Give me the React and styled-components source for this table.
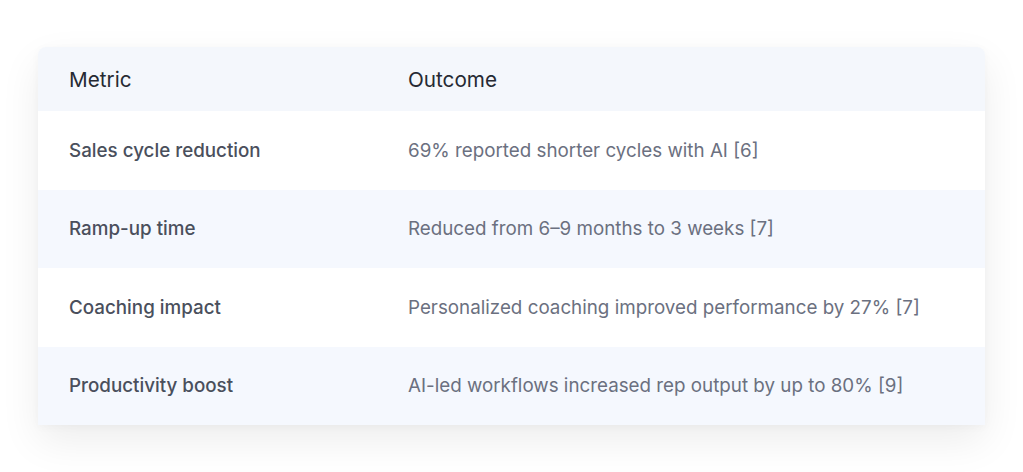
import React from 'react';
import styled, { createGlobalStyle } from 'styled-components';

const GlobalStyle = createGlobalStyle`
  html, body {
    margin: 0;
    background: #ffffff;
    font-family: Inter, "Noto Sans", sans-serif;
  }
`;

const rows = [
  ['Sales cycle reduction', '69% reported shorter cycles with AI [6]'],
  ['Ramp-up time', 'Reduced from 6–9 months to 3 weeks [7]'],
  ['Coaching impact', 'Personalized coaching improved performance by 27% [7]'],
  ['Productivity boost', 'AI-led workflows increased rep output by up to 80% [9]'],
];

class App extends React.Component {
  render() {
    return (
      <Page>
        <GlobalStyle />
        <Card>
          <HeadRow>
            <HeadCell>Metric</HeadCell>
            <HeadCell>Outcome</HeadCell>
          </HeadRow>
          {rows.map(([metric, outcome], i) => (
            <Row key={metric} shaded={i % 2 === 1}>
              <MetricCell>{metric}</MetricCell>
              <OutcomeCell>{outcome}</OutcomeCell>
            </Row>
          ))}
        </Card>
      </Page>
    );
  }
}

const Page = styled.div`
  min-height: 100vh;
  box-sizing: border-box;
  padding: 47px 38px 0 38px;
  background: #ffffff;
`;

const Card = styled.div`
  width: 947px;
  border-radius: 8px 8px 0 0;
  background: #ffffff;
  box-shadow: 0 16px 40px rgba(0, 0, 0, 0.075), 0 2px 10px rgba(0, 0, 0, 0.03);
`;

const HeadRow = styled.div`
  display: grid;
  grid-template-columns: 339px 1fr;
  align-items: center;
  height: 64px;
  padding-left: 31px;
  background: #f4f7fc;
  border-radius: 8px 8px 0 0;
`;

const HeadCell = styled.div`
  font-size: 20.7px;
  font-weight: 400;
  color: #262a33;
`;

const Row = styled.div`
  display: grid;
  grid-template-columns: 339px 1fr;
  align-items: center;
  height: 78.5px;
  padding-left: 31px;
  background: ${p => (p.shaded ? '#f5f8fe' : '#ffffff')};
`;

const MetricCell = styled.div`
  font-size: 18.8px;
  font-weight: 500;
  color: #4a4f5c;
`;

const OutcomeCell = styled.div`
  font-size: 18.8px;
  font-weight: 400;
  color: #6b7080;
`;

export default App;
